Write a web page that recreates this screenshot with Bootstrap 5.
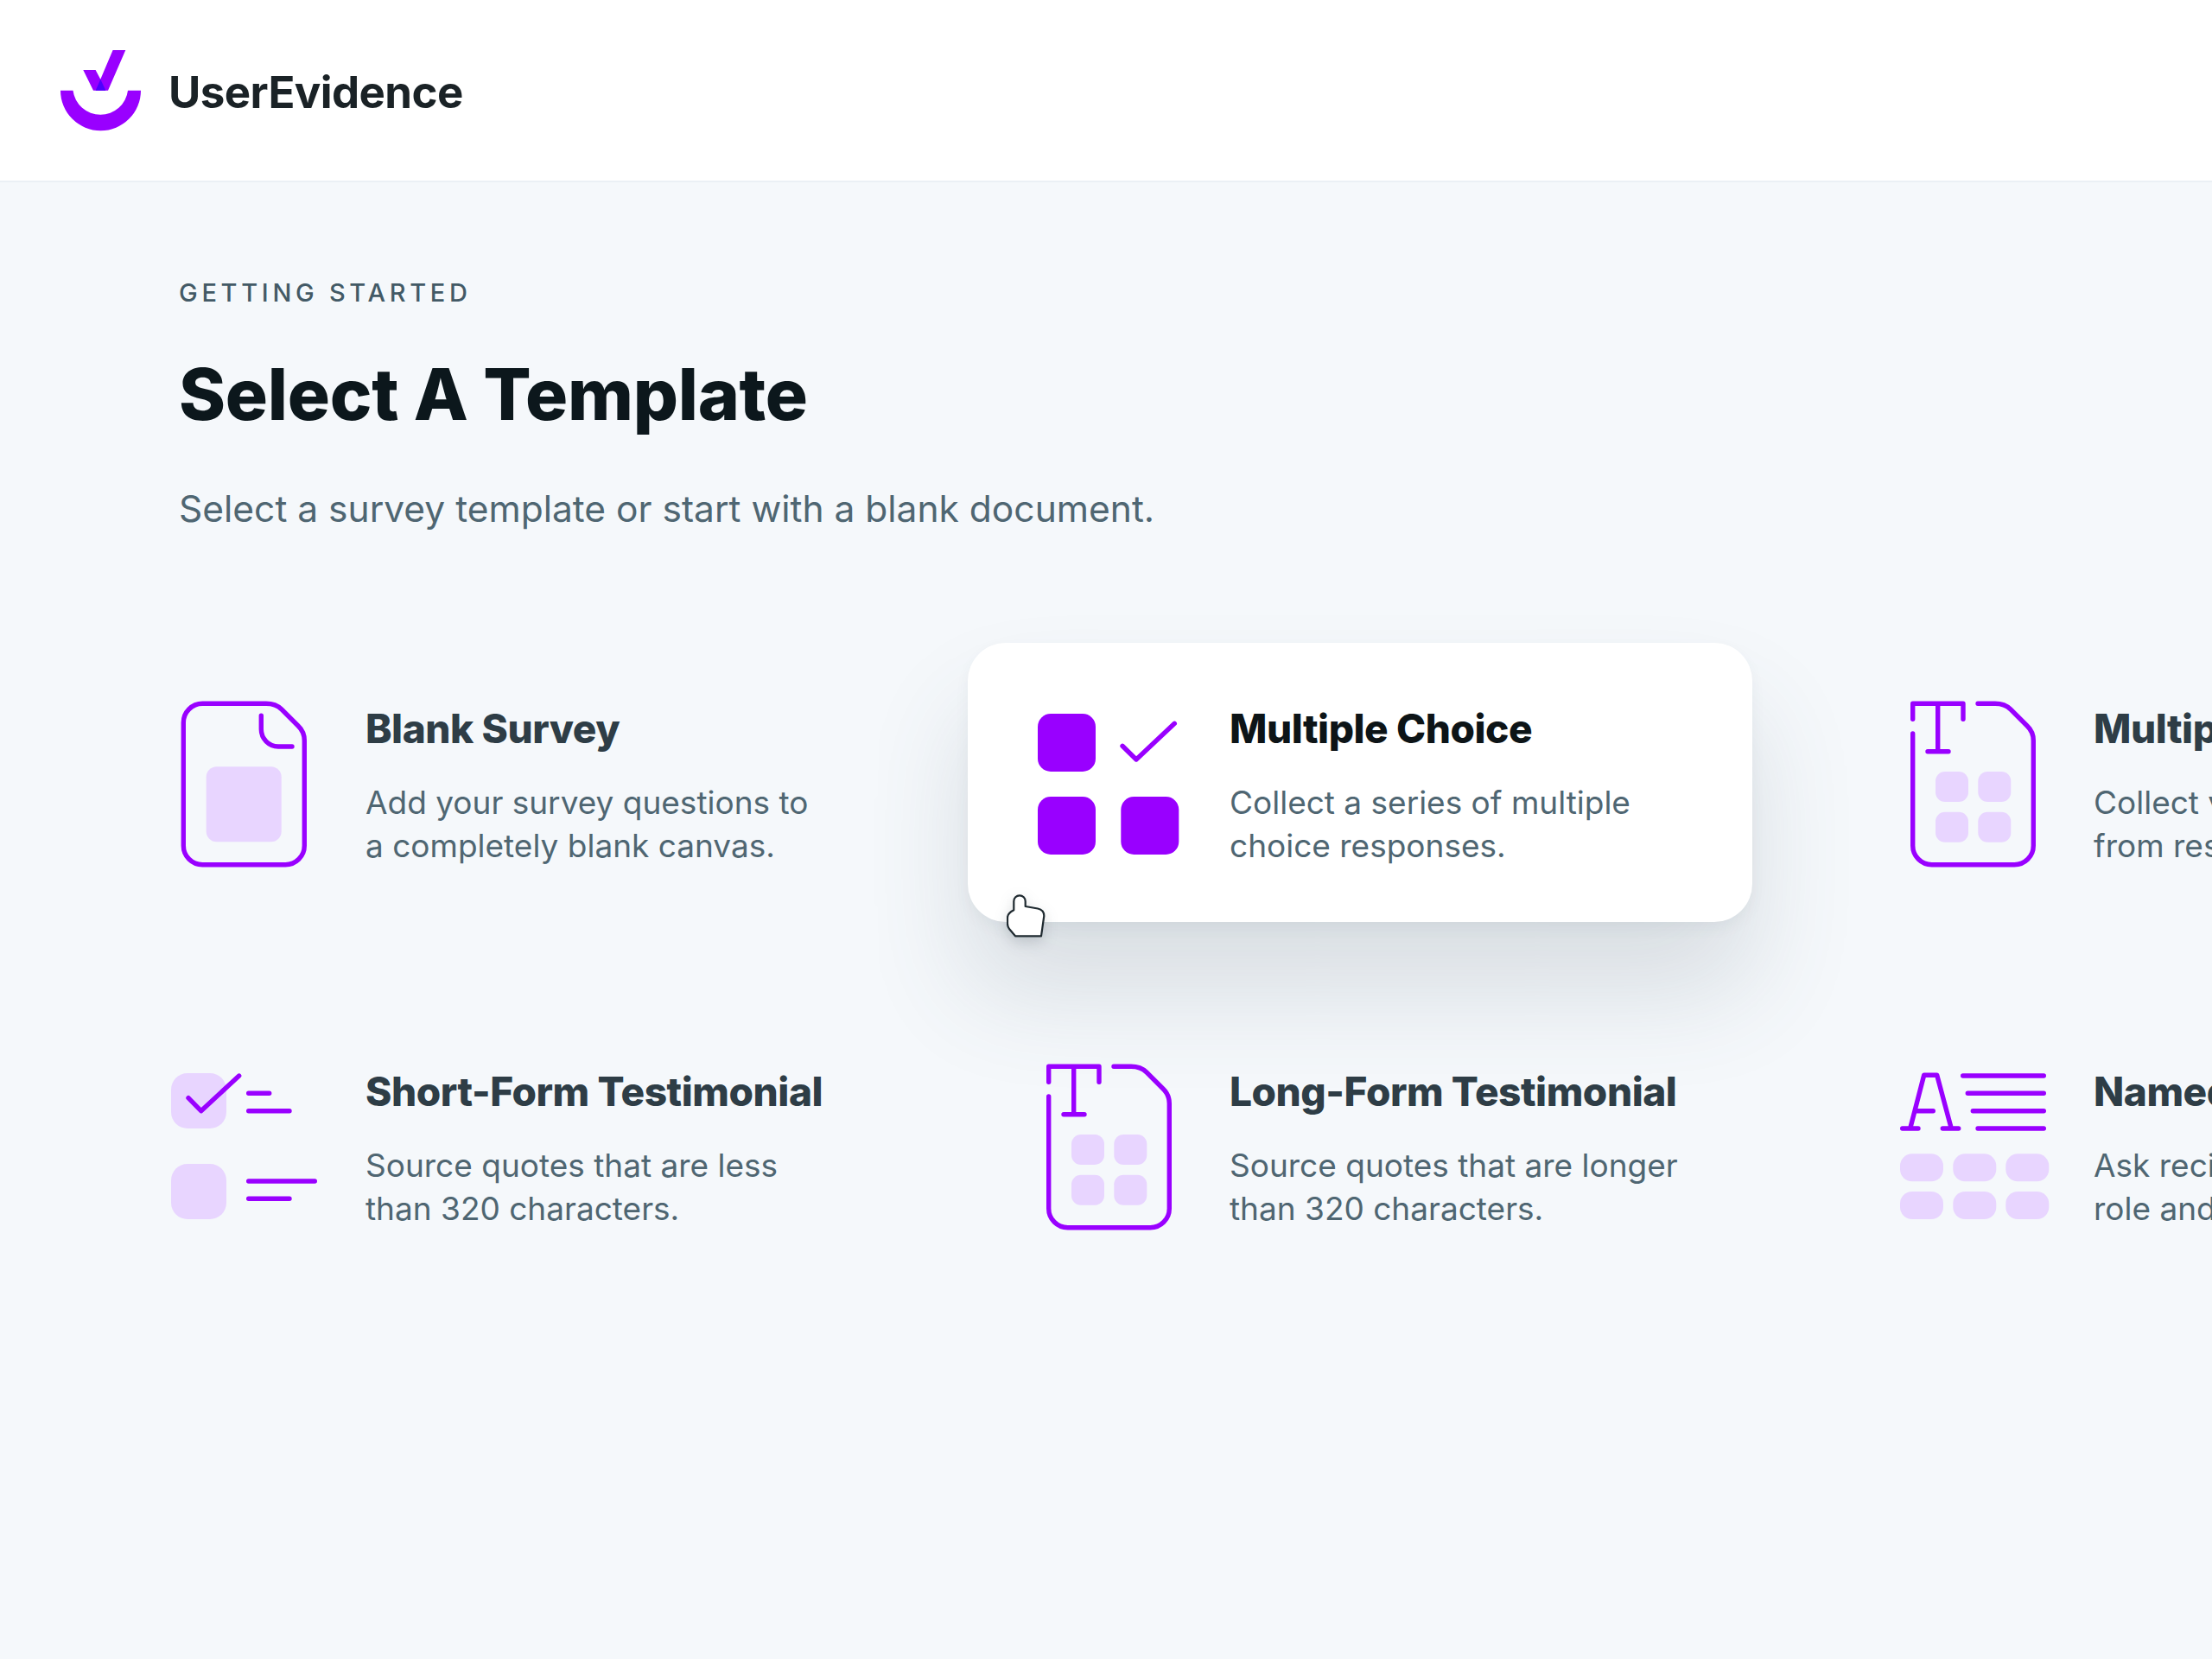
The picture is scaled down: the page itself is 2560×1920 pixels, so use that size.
<!DOCTYPE html>
<html lang="en">
<head>
  <meta charset="UTF-8" />
  <meta name="viewport" content="width=device-width, initial-scale=1.0" />
  <title>UserEvidence - Select A Template</title>
  <link rel="stylesheet" href="https://cdn.jsdelivr.net/npm/bootstrap@5.3.0/dist/css/bootstrap.min.css" />
  <style>
    body { font-family: Inter, "Liberation Sans", sans-serif; background: #f5f8fb; min-height: 1920px; overflow-x: hidden; }
    .top-bar { height: 211px; padding: 0 0 0 65px; border-bottom: 2px solid #ebf0f5 !important; justify-content: flex-start; }
    .top-bar .navbar-brand { font-size: 51px; font-weight: 700; letter-spacing: -0.6px; color: #1a2226; margin: 6px 0 0 30px; padding: 0; }
    .intro { padding: 111px 0 0 207px; }
    .eyebrow { font-size: 29px; font-weight: 500; letter-spacing: 4.7px; color: #435a66; line-height: 34px; margin: 0; }
    .intro h1 { font-size: 82px; font-weight: 800; letter-spacing: -0.3px; color: #0c171c; line-height: 98px; margin: 52px 0 0; }
    .lead-text { font-size: 42.5px; font-weight: 400; color: #4f6672; line-height: 50px; margin: 58px 0 0; }
    .template-grid { display: grid; grid-template-columns: repeat(3, 908px); gap: 97px 92px; margin: 130px 0 0 120px; width: 2908px; }
    .template { height: 323px; border-radius: 44px; background: transparent; }
    .template .card-body { padding: 61px 40px 0 63px; gap: 40px; }
    .template svg.icon { width: 200px; height: 200px; flex: none; }
    .template .card-title { font-size: 46px; font-weight: 800; letter-spacing: -0.45px; color: #2e3d46; line-height: 56px; margin: 10px 0 33px; white-space: nowrap; }
    .template .card-text { font-size: 37px; color: #4f6672; line-height: 49.5px; width: 535px; }
    .template.is-hover { background: #fff; box-shadow: 0 80px 120px rgba(66, 88, 102, .16), 0 8px 16px rgba(66, 88, 102, .06); }
    .template.is-hover .card-title { color: #0d1417; }
    .pointer { position: absolute; left: 45px; top: 290px; width: 45px; height: 52px; filter: drop-shadow(0 6px 8px rgba(40, 55, 65, .18)); }
    .ln { fill: none; stroke: #9900ff; stroke-width: 5.4; stroke-linecap: round; stroke-linejoin: round; }
    .soft { fill: #e8d5ff; }
    .solid { fill: #9900ff; }
  </style>
</head>
<body>
  <nav class="navbar top-bar bg-white border-bottom">
    <svg width="100" height="100" viewBox="0 0 100 100" aria-hidden="true">
      <path class="solid" d="M65.6 3H80.3L60 49.7H43L31.3 26H45.6L51.3 36.7Z" />
      <path fill="#4d00ff" d="M51.3 36.7L57.4 49.7H45.6Z" />
      <path class="solid" d="M5 49.7H19.5A32 32 0 0 0 83 49.7H98A46.5 46.5 0 0 1 5 49.7Z" />
    </svg>
    <a class="navbar-brand" href="#">UserEvidence</a>
  </nav>

  <main>
    <div class="intro">
      <p class="eyebrow">GETTING STARTED</p>
      <h1>Select A Template</h1>
      <p class="lead-text">Select a survey template or start with a blank document.</p>
    </div>

    <div class="template-grid">
      <div class="card template border-0">
        <div class="card-body d-flex">
          <svg class="icon" viewBox="0 0 200 200" aria-hidden="true">
            <path class="ln" d="M51.3 9.3H125Q136 9.3 143 16L162 35Q169.3 42 169.3 52V173.7A22 22 0 0 1 147.3 195.7H51.3A22 22 0 0 1 29.3 173.7V31.3A22 22 0 0 1 51.3 9.3Z" />
            <path class="ln" d="M119.3 23.3V39A20 20 0 0 0 139 59H155" />
            <rect class="soft" x="55.7" y="82.3" width="87" height="87" rx="12" />
          </svg>
          <div>
            <h5 class="card-title">Blank Survey</h5>
            <p class="card-text">Add your survey questions to a completely blank canvas.</p>
          </div>
        </div>
      </div>

      <div class="card template is-hover border-0">
        <div class="card-body d-flex">
          <svg class="icon" viewBox="0 0 200 200" aria-hidden="true">
            <rect class="solid" x="18" y="21" width="67" height="67" rx="15" />
            <rect class="solid" x="18" y="117" width="67" height="67" rx="15" />
            <rect class="solid" x="114.3" y="117" width="67" height="67" rx="15" />
            <path class="ln" d="M116 58.3L132 74L176.3 32.3" />
          </svg>
          <div>
            <h5 class="card-title">Multiple Choice</h5>
            <p class="card-text">Collect a series of multiple choice responses.</p>
          </div>
        </div>
        <svg class="pointer" viewBox="0 0 45 52" aria-hidden="true">
          <path fill="#fff" stroke="#1f2a30" stroke-width="2.2" stroke-linejoin="round" d="M8.3 19.3V9A6.7 6.7 0 0 1 21.7 9V15L36 17.5Q43.3 19 43.3 26L40 49.3H10L3 41Q1 38 1 35V28Q1 23 8.3 19.3Z" />
        </svg>
      </div>

      <div class="card template border-0">
        <div class="card-body d-flex">
          <svg class="icon" viewBox="0 0 200 200" aria-hidden="true">
            <path class="ln" d="M106 9.3H126Q137 9.3 144 16L163 35Q170.3 42 170.3 52V173.7A22 22 0 0 1 148.3 195.7H52.7A22 22 0 0 1 30.7 173.7V44" />
            <path class="ln" d="M30.7 27.3V9.3H89V27.3M59.7 9.3V64.7M48 64.7H72" />
            <rect class="soft" x="57" y="88" width="38" height="35" rx="11" />
            <rect class="soft" x="106.3" y="88" width="38" height="35" rx="11" />
            <rect class="soft" x="57" y="134.7" width="38" height="35" rx="11" />
            <rect class="soft" x="106.3" y="134.7" width="38" height="35" rx="11" />
          </svg>
          <div>
            <h5 class="card-title">Multiple Short Answer</h5>
            <p class="card-text">Collect verbatim testimonials from respondents.</p>
          </div>
        </div>
      </div>

      <div class="card template border-0">
        <div class="card-body d-flex">
          <svg class="icon" viewBox="0 0 200 200" aria-hidden="true">
            <rect class="soft" x="15" y="17" width="64" height="64" rx="19" />
            <rect class="soft" x="15" y="122" width="64" height="64" rx="19" />
            <path class="ln" d="M35 45.7L49.7 60.7L93.7 20" />
            <path class="ln" d="M104.7 40.3H128.7M104.7 60.7H152M104.7 142H181.3M104.7 162.3H152" />
          </svg>
          <div>
            <h5 class="card-title">Short-Form Testimonial</h5>
            <p class="card-text">Source quotes that are less than 320 characters.</p>
          </div>
        </div>
      </div>

      <div class="card template border-0">
        <div class="card-body d-flex">
          <svg class="icon" viewBox="0 0 200 200" aria-hidden="true">
            <path class="ln" d="M106 9.3H126Q137 9.3 144 16L163 35Q170.3 42 170.3 52V173.7A22 22 0 0 1 148.3 195.7H52.7A22 22 0 0 1 30.7 173.7V44" />
            <path class="ln" d="M30.7 27.3V9.3H89V27.3M59.7 9.3V64.7M48 64.7H72" />
            <rect class="soft" x="57" y="88" width="38" height="35" rx="11" />
            <rect class="soft" x="106.3" y="88" width="38" height="35" rx="11" />
            <rect class="soft" x="57" y="134.7" width="38" height="35" rx="11" />
            <rect class="soft" x="106.3" y="134.7" width="38" height="35" rx="11" />
          </svg>
          <div>
            <h5 class="card-title">Long-Form Testimonial</h5>
            <p class="card-text">Source quotes that are longer than 320 characters.</p>
          </div>
        </div>
      </div>

      <div class="card template border-0">
        <div class="card-body d-flex">
          <svg class="icon" viewBox="0 0 200 200" aria-hidden="true">
            <path class="ln" d="M27.7 81L43.7 19.3H58.7L75.3 81M34.3 60.7H54.3M18.7 81H37M65.3 81H83.7" />
            <path class="ln" d="M88.7 20H182.3M94.3 40.3H182.3M100.3 60.7H182.3M106 81H182.3" />
            <rect class="soft" x="16" y="110.3" width="50" height="32" rx="14" />
            <rect class="soft" x="77.3" y="110.3" width="50" height="32" rx="14" />
            <rect class="soft" x="138.3" y="110.3" width="50" height="32" rx="14" />
            <rect class="soft" x="16" y="154" width="50" height="32" rx="14" />
            <rect class="soft" x="77.3" y="154" width="50" height="32" rx="14" />
            <rect class="soft" x="138.3" y="154" width="50" height="32" rx="14" />
          </svg>
          <div>
            <h5 class="card-title">Named Testimonial</h5>
            <p class="card-text">Ask recipients for their name, role and company.</p>
          </div>
        </div>
      </div>
    </div>
  </main>

  <script src="https://cdn.jsdelivr.net/npm/bootstrap@5.3.0/dist/js/bootstrap.bundle.min.js"></script>
</body>
</html>
